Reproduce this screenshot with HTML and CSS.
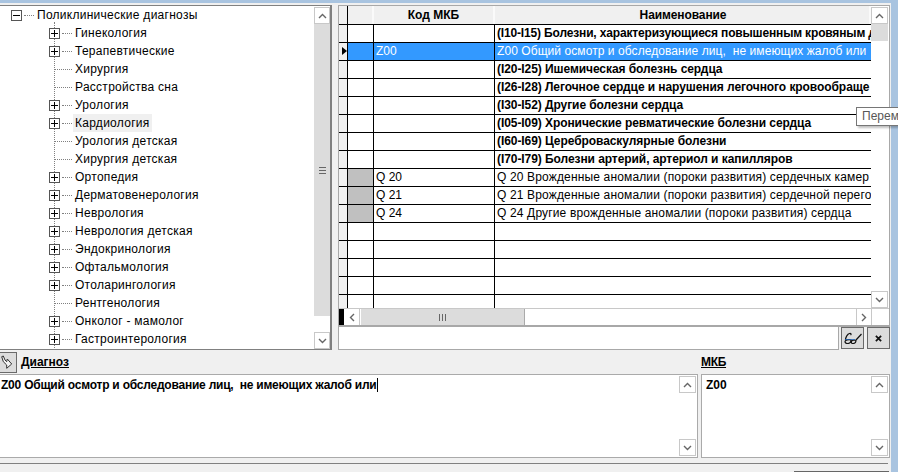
FILE: index.html
```html
<!DOCTYPE html>
<html lang="ru">
<head>
<meta charset="utf-8">
<title>Диагнозы</title>
<link rel="stylesheet" href="styles.css">
</head>
<body>
<svg class="defs" width="0" height="0" aria-hidden="true">
  <symbol id="up" viewBox="0 0 9 6"><path d="M1 5l3.5-3.5L8 5" fill="none" stroke="#666" stroke-width="1.4"/></symbol>
  <symbol id="down" viewBox="0 0 9 6"><path d="M1 1l3.5 3.5L8 1" fill="none" stroke="#666" stroke-width="1.4"/></symbol>
  <symbol id="left" viewBox="0 0 6 9"><path d="M5 1L1.5 4.5 5 8" fill="none" stroke="#666" stroke-width="1.4"/></symbol>
  <symbol id="right" viewBox="0 0 6 9"><path d="M1 1l3.5 3.5L1 8" fill="none" stroke="#666" stroke-width="1.4"/></symbol>
</svg>
<div class="shell">
  <div class="top-strip"></div>
  <div class="main">
    <div class="upper">
      <section class="tree-panel">
        <div class="tree">
          <div class="node root"><span class="box minus"></span><span class="dots root-dots"></span><span class="label">Поликлинические диагнозы</span></div>
          <div class="children">
            <div class="node"><span class="box"></span><span class="dots"></span><span class="label">Гинекология</span></div>
            <div class="node"><span class="box"></span><span class="dots"></span><span class="label">Терапевтические</span></div>
            <div class="node"><span class="nobox"></span><span class="dots long"></span><span class="label">Хирургия</span></div>
            <div class="node"><span class="nobox"></span><span class="dots long"></span><span class="label">Расстройства сна</span></div>
            <div class="node"><span class="box"></span><span class="dots"></span><span class="label">Урология</span></div>
            <div class="node"><span class="box"></span><span class="dots"></span><span class="label sel">Кардиология</span></div>
            <div class="node"><span class="nobox"></span><span class="dots long"></span><span class="label">Урология детская</span></div>
            <div class="node"><span class="nobox"></span><span class="dots long"></span><span class="label">Хирургия детская</span></div>
            <div class="node"><span class="box"></span><span class="dots"></span><span class="label">Ортопедия</span></div>
            <div class="node"><span class="box"></span><span class="dots"></span><span class="label">Дерматовенерология</span></div>
            <div class="node"><span class="box"></span><span class="dots"></span><span class="label">Неврология</span></div>
            <div class="node"><span class="box"></span><span class="dots"></span><span class="label">Неврология детская</span></div>
            <div class="node"><span class="box"></span><span class="dots"></span><span class="label">Эндокринология</span></div>
            <div class="node"><span class="box"></span><span class="dots"></span><span class="label">Офтальмология</span></div>
            <div class="node"><span class="box"></span><span class="dots"></span><span class="label">Отоларингология</span></div>
            <div class="node"><span class="nobox"></span><span class="dots long"></span><span class="label">Рентгенология</span></div>
            <div class="node"><span class="box"></span><span class="dots"></span><span class="label">Онколог - мамолог</span></div>
            <div class="node"><span class="box"></span><span class="dots"></span><span class="label">Гастроинтерология</span></div>
          </div>
        </div>
        <div class="vscroll tree-scroll">
          <div class="sb-btn"><svg class="chev-v"><use href="#up"/></svg></div>
          <div class="sb-thumb grow">
            <span class="grip"></span>
          </div>
          <div class="sb-gap"></div>
          <div class="sb-btn"><svg class="chev-v"><use href="#down"/></svg></div>
        </div>
      </section>
      <section class="right-col">
        <div class="grid-box">
          <div class="grid-top">
            <div class="grid-body">
              <div class="row head"><div class="c ind"></div><div class="c mark"></div><div class="c code">Код МКБ</div><div class="c name">Наименование</div></div>
              <div class="row bold tight"><div class="c ind"></div><div class="c mark"></div><div class="c code"></div><div class="c name">(I10-I15) Болезни, характеризующиеся повышенным кровяным д</div></div>
              <div class="row active"><div class="c ind"><span class="tri"></span></div><div class="c mark"></div><div class="c code">Z00</div><div class="c name">Z00 Общий осмотр и обследование лиц,&nbsp; не имеющих жалоб или</div></div>
              <div class="row bold"><div class="c ind"></div><div class="c mark"></div><div class="c code"></div><div class="c name">(I20-I25) Ишемическая болезнь сердца</div></div>
              <div class="row bold"><div class="c ind"></div><div class="c mark"></div><div class="c code"></div><div class="c name">(I26-I28) Легочное сердце и нарушения легочного кровообраще</div></div>
              <div class="row bold"><div class="c ind"></div><div class="c mark"></div><div class="c code"></div><div class="c name">(I30-I52) Другие болезни сердца</div></div>
              <div class="row bold"><div class="c ind"></div><div class="c mark"></div><div class="c code"></div><div class="c name">(I05-I09) Хронические ревматические болезни сердца</div></div>
              <div class="row bold"><div class="c ind"></div><div class="c mark"></div><div class="c code"></div><div class="c name">(I60-I69) Цереброваскулярные болезни</div></div>
              <div class="row bold"><div class="c ind"></div><div class="c mark"></div><div class="c code"></div><div class="c name">(I70-I79) Болезни артерий, артериол и капилляров</div></div>
              <div class="row"><div class="c ind"></div><div class="c mark gray"></div><div class="c code">Q 20</div><div class="c name">Q 20 Врожденные аномалии (пороки развития) сердечных камер</div></div>
              <div class="row"><div class="c ind"></div><div class="c mark gray"></div><div class="c code">Q 21</div><div class="c name">Q 21 Врожденные аномалии (пороки развития) сердечной перего</div></div>
              <div class="row"><div class="c ind"></div><div class="c mark gray"></div><div class="c code">Q 24</div><div class="c name">Q 24 Другие врожденные аномалии (пороки развития) сердца</div></div>
              <div class="row"><div class="c ind"></div><div class="c mark"></div><div class="c code"></div><div class="c name"></div></div>
              <div class="row"><div class="c ind"></div><div class="c mark"></div><div class="c code"></div><div class="c name"></div></div>
              <div class="row"><div class="c ind"></div><div class="c mark"></div><div class="c code"></div><div class="c name"></div></div>
              <div class="row"><div class="c ind"></div><div class="c mark"></div><div class="c code"></div><div class="c name"></div></div>
              <div class="row tail"><div class="c ind"></div><div class="c mark"></div><div class="c code"></div><div class="c name"></div></div>
            </div>
            <div class="vscroll grid-scroll">
              <div class="sb-btn"><svg class="chev-v"><use href="#up"/></svg></div>
              <div class="sb-thumb short"></div>
              <div class="grow"></div>
              <div class="sb-btn"><svg class="chev-v"><use href="#down"/></svg></div>
            </div>
          </div>
          <div class="hscroll">
            <span class="h-black"></span>
            <div class="hs-btn"><svg class="chev-h"><use href="#left"/></svg></div>
            <div class="hs-thumb"><span class="hgrip"></span></div>
            <div class="grow"></div>
            <div class="hs-btn right"><svg class="chev-h"><use href="#right"/></svg></div>
            <div class="hs-corner"></div>
          </div>
        </div>
        <div class="search-row">
          <div class="search-input"></div>
          <button class="tool-btn" aria-label="Очки">
            <svg class="glasses" viewBox="0 0 18 12"><path d="M1.500 8c0-3 2-6 4-6.500 1.500-.3 2 .8 1 1.500M1 9.500c0-1.500 4-2.500 6-1.500 0 2-1.500 3.500-3.500 3.500S1 10.500 1 9.500zM7.500 9c1.500-1 3-1 4.500-1 0 2-1 3.500-3 3.500S7.500 10.500 7.500 9zM12 8l5.500-6" fill="none" stroke="#111" stroke-width="1.200"/><path d="M1 7.500h10" stroke="#1e5fb0" stroke-width=".8"/></svg>
          </button>
          <button class="tool-btn" aria-label="Закрыть">
            <svg class="cross" viewBox="0 0 8 8"><path d="M1 1l6 6M7 1L1 7" stroke="#111" stroke-width="2"/></svg>
          </button>
        </div>
      </section>
    </div>
    <div class="labels">
      <div class="label-diag">
        <button class="pick-btn" aria-label="Выбрать">
          <svg class="pick" viewBox="0 0 16 19"><path d="M1.700 3.700L3.300 8.700 6.700 12v3.300L11.700 11 7.300 6 6.700 8.700 5 7 3.300 3z" fill="#f4f4f4" stroke="#333" stroke-width="1"/></svg>
        </button>
        <span class="cap">Диагноз</span>
      </div>
      <span class="cap mkb-cap">МКБ</span>
    </div>
    <div class="memos">
      <div class="memo memo-diag">
        <div class="memo-text">Z00 Общий осмотр и обследование лиц,&nbsp; не имеющих жалоб или<span class="caret"></span></div>
        <div class="vscroll memo-scroll">
          <div class="sb-btn"><svg class="chev-v"><use href="#up"/></svg></div>
          <div class="grow"></div>
          <div class="sb-btn"><svg class="chev-v"><use href="#down"/></svg></div>
        </div>
      </div>
      <div class="memo memo-mkb">
        <div class="memo-text">Z00</div>
        <div class="vscroll memo-scroll">
          <div class="sb-btn"><svg class="chev-v"><use href="#up"/></svg></div>
          <div class="grow"></div>
          <div class="sb-btn"><svg class="chev-v"><use href="#down"/></svg></div>
        </div>
      </div>
    </div>
    <div class="rule"></div>
    <div class="foot-line"></div>
  </div>
  <div class="tooltip">Перем</div>
</div>
</body>
</html>
```
FILE: styles.css
```css
* { box-sizing: border-box; }
html, body { margin: 0; padding: 0; }
body {
  width: 898px;
  height: 472px;
  overflow: hidden;
  background: #f0f0f0;
  font: 12px "Liberation Sans", Arial, sans-serif;
  color: #000;
}
.defs { position: absolute; }
.shell {
  position: relative;
  width: 898px;
  height: 472px;
  border-top: 3px solid #a9c4e0;
  border-right: 7px solid #a9c4e0;
  overflow: visible;
}
.top-strip { height: 2px; }
.main { width: 891px; display: flex; flex-direction: column; }
.upper { display: flex; gap: 6px; height: 345px; }
.grow { flex: 1; }

/* tree */
.tree-panel {
  width: 332px;
  display: flex;
  background: #fff;
  border-top: 1px solid #808080;
  border-right: 2px solid #808080;
  border-bottom: 1px solid #808080;
}
.tree { flex: 1; overflow: hidden; }
.node { height: 18px; display: flex; align-items: center; white-space: nowrap; }
.root { padding-left: 11px; }
.children {
  position: relative;
  padding-left: 49px;
}
.children::before {
  content: "";
  position: absolute;
  left: 54px;
  top: -2px;
  bottom: -4px;
  border-left: 1px dotted #808080;
}
.children .node { position: relative; }
.box {
  position: relative;
  width: 11px;
  height: 11px;
  flex: none;
  background: #fff;
  border: 1px solid #555;
  z-index: 1;
}
.box::before {
  content: "";
  position: absolute;
  left: 1px; right: 1px; top: 4px;
  height: 1px;
  background: #000;
}
.box::after {
  content: "";
  position: absolute;
  top: 1px; bottom: 1px; left: 4px;
  width: 1px;
  background: #000;
}
.box.minus::after { display: none; }
.nobox { width: 5px; flex: none; }
.dots {
  width: 10px;
  flex: none;
  margin: 0 1px 0 2px;
  border-top: 1px dotted #808080;
  height: 0;
}
.dots.long { width: 17px; margin: 0 1px 0 1px; }
.label { display: block; padding: 0 2px; line-height: 18px; height: 18px; letter-spacing: 0.27px; }
.label.sel { background: #f0f0f0; }

/* scrollbars */
.vscroll { width: 17px; flex: none; display: flex; flex-direction: column; background: #fff; }
.tree-scroll { width: 16px; padding-top: 1px; }
.sb-btn {
  height: 17px;
  flex: none;
  display: flex;
  align-items: center;
  justify-content: center;
  background: #fff;
  border: 1px solid #c8c8c8;
}
.chev-v { width: 9px; height: 6px; }
.chev-h { width: 6px; height: 9px; }
.sb-thumb { background: #dcdcdc; display: flex; align-items: center; justify-content: center; }
.sb-thumb.short { height: 17px; flex: none; }
.sb-gap { height: 16px; flex: none; }
.grip { width: 7px; height: 7px; border-top: 1px solid #666; border-bottom: 1px solid #666; position: relative; }
.grip::after { content: ""; position: absolute; left: 0; right: 0; top: 2px; height: 1px; background: #666; }

/* grid */
.right-col { width: 552px; display: flex; flex-direction: column; }
.grid-box {
  height: 322px;
  flex: none;
  background: #fff;
  border-top: 1px solid #a8a8a8;
  border-right: 1px solid #a8a8a8;
  border-bottom: 2px solid #a8a8a8;
  border-left: 1px solid #a8a8a8;
  display: flex;
  flex-direction: column;
}
.grid-top { display: flex; flex: 1; min-height: 0; }
.grid-body { width: 532px; overflow: hidden; height: 302px; }
.grid-scroll { padding-top: 1px; height: 302px; }
.row {
  display: grid;
  grid-template-columns: 9px 26px 121px 376px;
  height: 18px;
  border-bottom: 1px solid #000;
  line-height: 17px;
  white-space: nowrap;
}
.row.head { height: 19px; text-align: center; font-weight: bold; line-height: 18px; }
.row.bold { font-weight: bold; }
.row.tail { height: 13px; border-bottom: 0; }
.c { overflow: hidden; border-right: 1px solid #000; padding: 0 2px; }
.ind { background: #f0f0f0; padding: 0; position: relative; }
.mark { padding: 0; }
.mark.gray { background: #c0c0c0; }
.name { border-right: 0; letter-spacing: 0.15px; }
.row.bold .name { letter-spacing: -0.07px; }
.row.bold.tight .name { letter-spacing: -0.16px; }
.row.active .name { letter-spacing: 0.07px; }
.row.head .name { letter-spacing: -0.1px; padding-left: 4px; }
.head .c { background: #f0f0f0; border-right: 2px solid #fafafa; }
.head .ind { border-right: 1px solid #000; }
.row.active { background: #3399ff; color: #fff; }
.row.active .ind { background: #f0f0f0; }
.tri {
  position: absolute;
  right: 0;
  top: 4px;
  border-left: 5px solid #000;
  border-top: 4px solid transparent;
  border-bottom: 4px solid transparent;
}
.hscroll { height: 17px; flex: none; display: flex; background: #fff; border-top: 1px solid #c8c8c8; }
.h-black { width: 5px; background: #000; flex: none; }
.hs-btn {
  width: 16px; flex: none;
  display: flex; align-items: center; justify-content: center;
  border-right: 1px solid #c8c8c8;
  background: #fff;
}
.hs-btn.right { border-left: 1px solid #c8c8c8; }
.hs-thumb {
  width: 164px; flex: none;
  margin-left: 1px;
  background: #dcdcdc;
  border-right: 1px solid #aaa;
  display: flex; align-items: center; justify-content: center;
}
.hgrip { width: 7px; height: 7px; border-left: 1px solid #666; border-right: 1px solid #666; position: relative; }
.hgrip::after { content: ""; position: absolute; top: 0; bottom: 0; left: 2px; width: 1px; background: #666; }
.hs-corner { width: 17px; flex: none; }

.search-row { display: flex; align-items: flex-start; gap: 3px; height: 23px; }
.search-input {
  flex: none;
  width: 501px;
  height: 23px;
  margin-right: -1px;
  background: #fff;
  border-left: 1px solid #a8a8a8;
  border-right: 1px solid #a8a8a8;
  border-bottom: 1px solid #a8a8a8;
}
.tool-btn {
  flex: none;
  width: 23px; height: 22px;
  padding: 0;
  background: #dcdcdc;
  border: 1px solid #6a6a6a;
  display: flex; align-items: center; justify-content: center;
}
.glasses { width: 18px; height: 12px; }
.cross { width: 7px; height: 7px; }

/* bottom */
.labels { height: 24px; display: flex; align-items: center; }
.label-diag { width: 701px; display: flex; align-items: center; gap: 4px; }
.pick-btn {
  width: 17px; height: 21px;
  padding: 0;
  background: #dcdcdc;
  border: 1px solid #6a6a6a;
  border-left: 0;
  display: block;
}
.pick { display: block; width: 16px; height: 19px; }
.cap { font-weight: bold; text-decoration: underline; }
.mkb-cap { letter-spacing: -0.3px; }
.memos { display: flex; height: 84px; gap: 3px; }
.memo {
  background: #fff;
  border: 1px solid #aaa;
  display: flex;
  padding: 1px;
  height: 84px;
}
.memo-diag { width: 698px; border-left: 0; padding-left: 0; }
.memo-mkb { width: 189px; }
.memo-text { flex: 1; font-weight: bold; padding: 2px 1px 0 1px; white-space: nowrap; line-height: 15px; }
.memo-diag .memo-text { letter-spacing: -0.22px; }
.memo-mkb .memo-text { padding-left: 3px; }
.memo-scroll { height: 80px; }
.caret { display: inline-block; width: 1px; height: 14px; background: #000; vertical-align: -3px; }
.rule { height: 1px; margin-top: 5px; width: 888px; background: #808080; }
.foot-line { height: 1px; margin: 7px 0 0 794px; width: 95px; background: #666; }

.tooltip {
  position: absolute;
  left: 856px;
  top: 104px;
  width: 60px;
  height: 19px;
  line-height: 17px;
  padding-left: 5px;
  background: #fff;
  border: 1px solid #767676;
  box-shadow: 2px 2px 2px rgba(0,0,0,.25);
  color: #575757;
  white-space: nowrap;
}
```
